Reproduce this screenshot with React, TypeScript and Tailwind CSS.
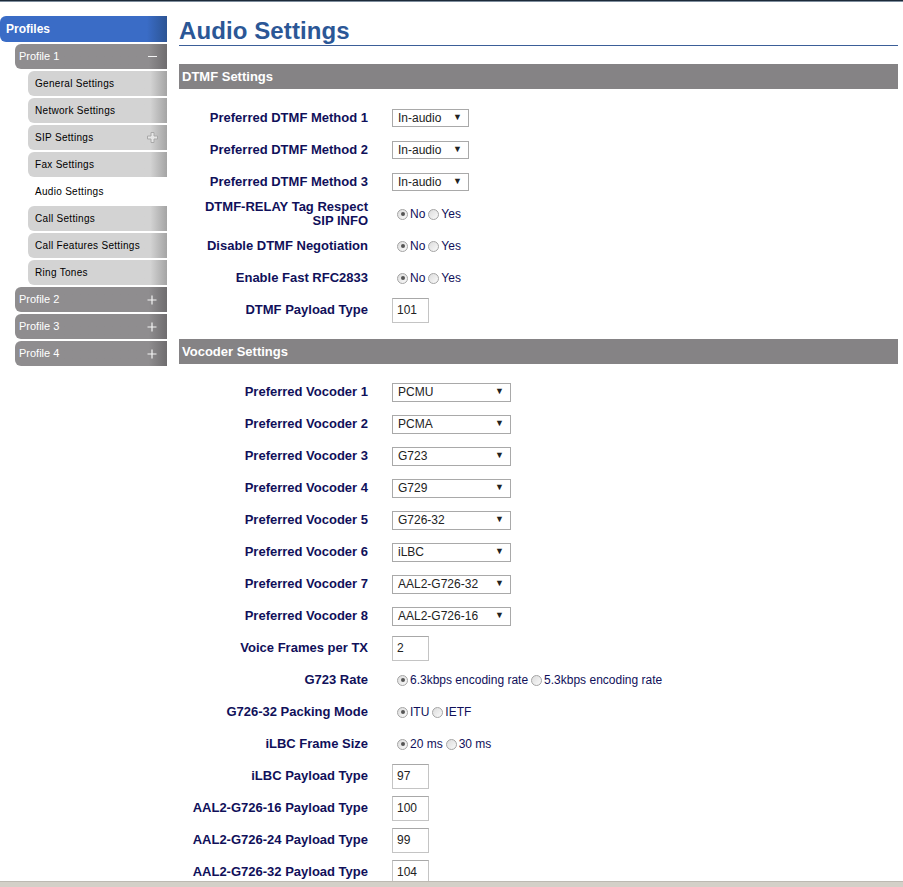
import React from "react";

type Row =
  | { label: string[]; kind: "select"; value: string; width: "narrow" | "wide" }
  | { label: string[]; kind: "radio"; options: string[]; checked: number }
  | { label: string[]; kind: "text"; value: string };

const dtmfRows: Row[] = [
  { label: ["Preferred DTMF Method 1"], kind: "select", value: "In-audio", width: "narrow" },
  { label: ["Preferred DTMF Method 2"], kind: "select", value: "In-audio", width: "narrow" },
  { label: ["Preferred DTMF Method 3"], kind: "select", value: "In-audio", width: "narrow" },
  { label: ["DTMF-RELAY Tag Respect", "SIP INFO"], kind: "radio", options: ["No", "Yes"], checked: 0 },
  { label: ["Disable DTMF Negotiation"], kind: "radio", options: ["No", "Yes"], checked: 0 },
  { label: ["Enable Fast RFC2833"], kind: "radio", options: ["No", "Yes"], checked: 0 },
  { label: ["DTMF Payload Type"], kind: "text", value: "101" },
];

const vocoderRows: Row[] = [
  { label: ["Preferred Vocoder 1"], kind: "select", value: "PCMU", width: "wide" },
  { label: ["Preferred Vocoder 2"], kind: "select", value: "PCMA", width: "wide" },
  { label: ["Preferred Vocoder 3"], kind: "select", value: "G723", width: "wide" },
  { label: ["Preferred Vocoder 4"], kind: "select", value: "G729", width: "wide" },
  { label: ["Preferred Vocoder 5"], kind: "select", value: "G726-32", width: "wide" },
  { label: ["Preferred Vocoder 6"], kind: "select", value: "iLBC", width: "wide" },
  { label: ["Preferred Vocoder 7"], kind: "select", value: "AAL2-G726-32", width: "wide" },
  { label: ["Preferred Vocoder 8"], kind: "select", value: "AAL2-G726-16", width: "wide" },
  { label: ["Voice Frames per TX"], kind: "text", value: "2" },
  { label: ["G723 Rate"], kind: "radio", options: ["6.3kbps encoding rate", "5.3kbps encoding rate"], checked: 0 },
  { label: ["G726-32 Packing Mode"], kind: "radio", options: ["ITU", "IETF"], checked: 0 },
  { label: ["iLBC Frame Size"], kind: "radio", options: ["20 ms", "30 ms"], checked: 0 },
  { label: ["iLBC Payload Type"], kind: "text", value: "97" },
  { label: ["AAL2-G726-16 Payload Type"], kind: "text", value: "100" },
  { label: ["AAL2-G726-24 Payload Type"], kind: "text", value: "99" },
  { label: ["AAL2-G726-32 Payload Type"], kind: "text", value: "104" },
];

const subItems = [
  "General Settings",
  "Network Settings",
  "SIP Settings",
  "Fax Settings",
  "Audio Settings",
  "Call Settings",
  "Call Features Settings",
  "Ring Tones",
];

function Radio({ checked }: { checked: boolean }) {
  return (
    <span className="inline-flex w-[11px] h-[11px] rounded-full border border-[#a4a4a4] bg-gradient-to-br from-[#dcdcdc] to-[#fafafa] items-center justify-center">
      {checked && <span className="w-[4px] h-[4px] rounded-full bg-[#555]" />}
    </span>
  );
}

function Control({ row }: { row: Row }) {
  if (row.kind === "select") {
    return (
      <div
        className={
          row.width === "narrow"
            ? "flex items-center justify-between w-[77px] h-[18px] border border-[#a9a9a9] bg-white pl-[5px] pr-[6px] text-[12px] text-[#222]"
            : "flex items-center justify-between w-[119px] h-[19px] border border-[#a9a9a9] bg-white pl-[5px] pr-[6px] text-[12px] text-[#222]"
        }
      >
        <span>{row.value}</span>
        <span className="text-[9px] text-[#222]">▼</span>
      </div>
    );
  }
  if (row.kind === "text") {
    return (
      <div className="flex items-center w-[37px] h-[25px] border border-[#c4c4c4] border-t-[#a8a8a8] bg-white pl-[4px] text-[12px] text-[#222]">
        {row.value}
      </div>
    );
  }
  return (
    <div className="flex items-center pl-[5px] text-[12px] text-[#10105a]">
      {row.options.map((opt, i) => (
        <span key={opt} className="flex items-center gap-[2px] mr-[3px]">
          <Radio checked={i === row.checked} />
          <span>{opt}</span>
        </span>
      ))}
    </div>
  );
}

function Section({ title, rows, last }: { title: string; rows: Row[]; last?: boolean }) {
  return (
    <div>
      <div className="h-[25px] bg-[#858385] flex items-center pl-[3px] pt-px text-white font-bold text-[13px]">
        {title}
      </div>
      <div className={last ? "pt-3" : "pt-[13px] pb-[13px]"}>
        {rows.map((row) => (
          <div key={row.label.join(" ")} className="flex items-center h-8">
            <div className="w-[189px] text-right font-bold text-[13px] leading-[14px] text-[#10105a]">
              {row.label.map((l) => (
                <div key={l}>{l}</div>
              ))}
            </div>
            <div className="ml-6">
              <Control row={row} />
            </div>
          </div>
        ))}
      </div>
    </div>
  );
}

function Plus({ color }: { color: string }) {
  return (
    <svg width="10" height="10" viewBox="0 0 10 10">
      <path d="M5 0.5V9.5M0.5 5H9.5" stroke={color} strokeWidth="1.2" />
    </svg>
  );
}

function Sidebar() {
  return (
    <div className="w-[167px] shrink-0 flex flex-col gap-[2px] pt-[14px] text-[11px]">
      <div className="h-[26px] rounded-l-[6px] bg-gradient-to-r from-[#3a6cc6] from-[88%] to-[#2c5494] flex items-center pl-[6px] text-white font-bold text-[12px]">
        Profiles
      </div>
      <div className="ml-[15px] h-[25px] rounded-l-[6px] bg-gradient-to-r from-[#8f8d8f] from-[88%] to-[#6f6d6f] flex items-center justify-between pl-[4px] pr-[10px] text-white">
        <span>Profile 1</span>
        <span className="w-[9px] h-[1.5px] bg-[#f4f4f4]" />
      </div>
      {subItems.map((name) =>
        name === "Audio Settings" ? (
          <div key={name} className="ml-[28px] h-[25px] flex items-center pl-[7px] text-[10px] tracking-[0.3px] text-black">
            {name}
          </div>
        ) : (
          <div
            key={name}
            className="ml-[28px] h-[25px] rounded-l-[6px] bg-gradient-to-r from-[#d3d3d3] from-[88%] to-[#a4a4a4] flex items-center justify-between pl-[7px] pr-[9px] text-[10px] tracking-[0.3px] text-black"
          >
            <span>{name}</span>
            {name === "SIP Settings" && (
              <svg width="11" height="11" viewBox="0 0 11 11">
                <path d="M4 0.5H7V4H10.5V7H7V10.5H4V7H0.5V4H4Z" fill="#e6e6e6" stroke="#a8a8a8" strokeWidth="1" />
              </svg>
            )}
          </div>
        )
      )}
      {["Profile 2", "Profile 3", "Profile 4"].map((p) => (
        <div
          key={p}
          className="ml-[15px] h-[25px] rounded-l-[6px] bg-gradient-to-r from-[#8f8d8f] from-[88%] to-[#6f6d6f] flex items-center justify-between pl-[4px] pr-[10px] text-white"
        >
          <span>{p}</span>
          <Plus color="#f4f4f4" />
        </div>
      ))}
    </div>
  );
}

export default function App() {
  return (
    <div
      className="h-[887px] w-[903px] flex flex-col overflow-hidden bg-white"
      style={{ fontFamily: '"Liberation Sans", Arial, sans-serif' }}
    >
      <div className="h-px bg-[#1c2a39]" />
      <div className="h-px bg-[#7d8c9c]" />
      <div className="flex-1 flex overflow-hidden">
        <Sidebar />
        <div className="flex-1 ml-3 mr-[5px]">
          <div className="pt-[15px] border-b border-[#3b5e98] mb-[18px]">
            <h1 className="text-[24px] leading-[27px] font-bold tracking-[0.1px] text-[#2b5796] pb-px">Audio Settings</h1>
          </div>
          <Section title="DTMF Settings" rows={dtmfRows} />
          <Section title="Vocoder Settings" rows={vocoderRows} last />
        </div>
      </div>
      <div className="h-[6px] bg-[#d4d0c8] border-t border-[#bdb9b2]" />
    </div>
  );
}
